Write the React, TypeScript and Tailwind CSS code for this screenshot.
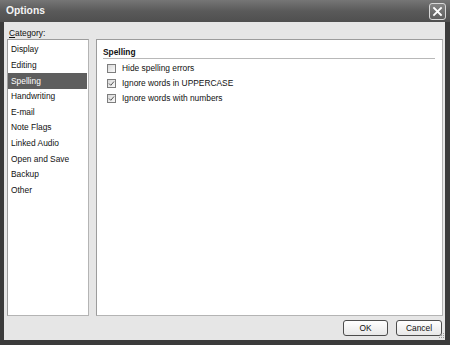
import React from "react";

const categories = [
  "Display",
  "Editing",
  "Spelling",
  "Handwriting",
  "E-mail",
  "Note Flags",
  "Linked Audio",
  "Open and Save",
  "Backup",
  "Other",
];

function Checkbox({ checked, label }: { checked: boolean; label: string }) {
  return (
    <div className="flex h-[15px] items-center">
      <div className="ml-[4px] flex h-[9px] w-[9px] items-center justify-center border border-[#7d7d7d] bg-gradient-to-br from-[#d8d8d8] to-[#fafafa]">
        {checked && (
          <svg width="7" height="7" viewBox="0 0 7 7">
            <path d="M1 3.5 L2.8 5.3 L6 1.5" fill="none" stroke="#555" strokeWidth="1" />
          </svg>
        )}
      </div>
      <span className="ml-[6px] text-[8.4px] leading-[11px] text-[#111]">{label}</span>
    </div>
  );
}

export default function App() {
  return (
    <div
      className="flex h-[345px] w-[450px] flex-col bg-[#3b3b3b]"
      style={{ fontFamily: '"Liberation Sans", Arial, sans-serif' }}
    >
      {/* Title bar */}
      <div className="flex h-[22px] items-center justify-between bg-gradient-to-b from-[#767676] via-[#5a5a5a] to-[#4f4f4f] pl-[6px] pr-[4px]">
        <span className="text-[10.3px] font-bold text-[#f4f4f4]">Options</span>
        <div className="flex h-[17px] w-[17px] items-center justify-center rounded-[3px] border border-[#d8d8d8] bg-gradient-to-b from-[#858585] to-[#5e5e5e]">
          <svg width="11" height="11" viewBox="0 0 11 11">
            <path d="M2 2 L9 9 M9 2 L2 9" stroke="#ffffff" strokeWidth="1.8" strokeLinecap="square" />
          </svg>
        </div>
      </div>

      {/* Body */}
      <div className="relative mb-[5px] ml-[4px] mr-[5px] flex flex-1 flex-col bg-[#e6e6e6] pl-[3px] pr-[2px] pt-[5px]">
        <div className="h-[12px] pl-[2px] text-[8.4px] leading-[12px] text-[#111]">
          <span className="underline">C</span>ategory:
        </div>

        <div className="flex h-[277px] gap-[7px]">
          {/* Category list */}
          <div className="w-[82px] border border-t-[#9c9c9c] border-l-[#9c9c9c] border-r-[#b4b4b4] border-b-[#b4b4b4] bg-white pt-[2px]">
            {categories.map((c) => (
              <div
                key={c}
                className={
                  c === "Spelling"
                    ? "mr-[1px] flex h-[15.6px] items-center bg-[#5e5e5e] pl-[3px] text-[8.4px] text-white"
                    : "flex h-[15.6px] items-center pl-[3px] text-[8.4px] text-[#111]"
                }
              >
                {c}
              </div>
            ))}
          </div>

          {/* Right panel */}
          <div className="flex-1 border border-t-[#9c9c9c] border-l-[#9c9c9c] border-r-[#b4b4b4] border-b-[#b4b4b4] bg-white pl-[6px] pr-[7px] pt-[7px]">
            <div className="h-[12px] border-b border-[#b8b8b8] text-[8.4px] font-bold leading-[11px] text-[#111]">
              Spelling
            </div>
            <div className="mt-[2px] flex flex-col">
              <Checkbox checked={false} label="Hide spelling errors" />
              <Checkbox checked={true} label="Ignore words in UPPERCASE" />
              <Checkbox checked={true} label="Ignore words with numbers" />
            </div>
          </div>
        </div>

        {/* Buttons */}
        <div className="mt-[4px] flex justify-end gap-[8px] pr-[1px]">
          <button className="flex h-[16px] w-[45px] items-center justify-center rounded-[3px] border border-[#4c4c4c] bg-gradient-to-b from-[#ffffff] to-[#e8e8e8] text-[8.4px] text-[#111]">
            OK
          </button>
          <button className="flex h-[16px] w-[46px] items-center justify-center rounded-[3px] border border-[#4c4c4c] bg-gradient-to-b from-[#ffffff] to-[#e8e8e8] text-[8.4px] text-[#111]">
            Cancel
          </button>
        </div>

        {/* Resize grip */}
        <svg className="absolute bottom-[1px] right-[0px]" width="7" height="7" viewBox="0 0 7 7">
          <rect x="5" y="1" width="1" height="1" fill="#999" />
          <rect x="3" y="3" width="1" height="1" fill="#999" />
          <rect x="5" y="3" width="1" height="1" fill="#999" />
          <rect x="1" y="5" width="1" height="1" fill="#999" />
          <rect x="3" y="5" width="1" height="1" fill="#999" />
          <rect x="5" y="5" width="1" height="1" fill="#999" />
        </svg>
      </div>
    </div>
  );
}
